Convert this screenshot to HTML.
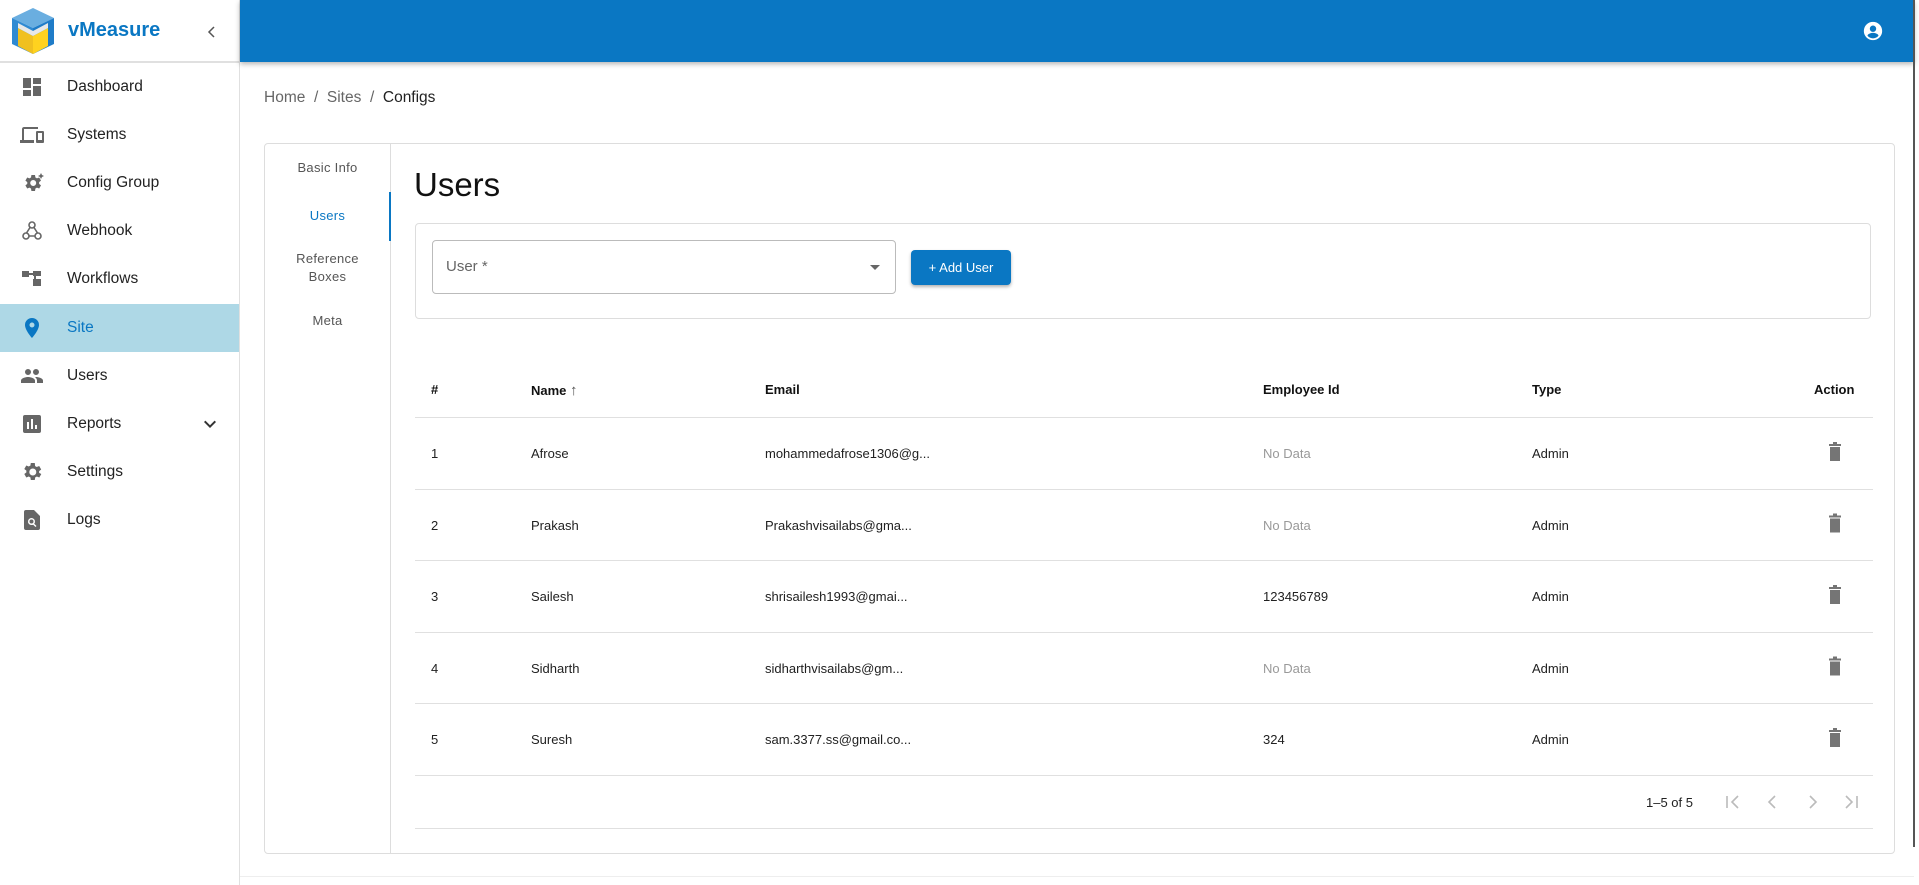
<!DOCTYPE html>
<html><head><meta charset="utf-8"><style>
*{box-sizing:border-box;margin:0;padding:0}
body{width:1919px;height:885px;overflow:hidden;background:#fff;font-family:"Liberation Sans",Roboto,sans-serif;position:relative;color:#212121}
.sb{position:absolute;left:0;top:0;width:240px;height:885px;border-right:1px solid #e0e0e0;background:#fff}
.logo{height:63px;border-bottom:2px solid #e0e0e0;position:relative}
.logo .t{position:absolute;left:68px;top:19px;font-size:20px;font-weight:bold;color:#0a77c3}
.mi{position:absolute;left:0;width:239px;height:48px;display:flex;align-items:center;font-size:15.5px;color:#222}
.mi svg{position:absolute;left:20px;width:24px;height:24px;fill:#666}
.mi span{position:absolute;left:67px}
.mi.act{background:#aed8e6;color:#0a77c3}
.mi.act svg{fill:#0a77c3}
.hd{position:absolute;left:240px;top:0;width:1674px;height:62px;background:#0a77c3;box-shadow:0 2px 5px rgba(0,0,0,.3)}
.bc{position:absolute;left:264px;top:89px;font-size:15.5px;color:#666}
.bc b{font-weight:normal;color:#222}
.card{position:absolute;left:264px;top:143px;width:1631px;height:711px;border:1px solid #ddd;border-radius:4px}
.tabs{position:absolute;left:0;top:0;width:126px;height:709px;border-right:1px solid #ddd}
.tab{position:absolute;left:0;width:125px;text-align:center;font-size:13px;color:#555;line-height:18px;letter-spacing:.3px}
.tl{position:absolute;font-size:13px}
.th{font-weight:bold;color:#111}
.row{position:absolute;left:415px;width:1458px;height:1px;background:#e0e0e0}
.scr{position:absolute;left:1913px;top:0;width:2px;height:847px;background:#555}
</style></head><body>
<div class="sb">
 <div class="logo">
  <svg style="position:absolute;left:10px;top:6px" width="46" height="50" viewBox="0 0 46 50">
   <polygon points="23,2 44,12 23,22 2,12" fill="#6aaee0"/>
   <polygon points="2,12 23,22 23,48 2,38" fill="#2f8ad3"/>
   <polygon points="44,12 23,22 23,48 44,38" fill="#1f7cc8"/>
   <polygon points="8,22 23,30 23,48 8,40" fill="#f0c020"/>
   <polygon points="38,22 23,30 23,48 38,40" fill="#ffd21f"/>
   <polygon points="8,17 23,25 38,17 38,22 23,30 8,22" fill="#e8e8e8"/>
  </svg>
  <div class="t">vMeasure</div>
  <svg style="position:absolute;left:204px;top:24px" width="16" height="16" viewBox="0 0 16 16"><path d="M10 3 5 8l5 5" stroke="#555" stroke-width="1.5" fill="none"/></svg>
 </div>
 <div class="mi" style="top:63px"><svg viewBox="0 0 24 24"><path d="M3 13h8V3H3zm0 8h8v-6H3zm10 0h8V11h-8zm0-18v6h8V3z"/></svg><span>Dashboard</span></div>
 <div class="mi" style="top:111px"><svg viewBox="0 0 24 24"><path d="M4 6h14V4H4c-1.1 0-2 .9-2 2v11H0v3h14v-3H4zm19 2h-6c-.5 0-1 .5-1 1v10c0 .5.5 1 1 1h6c.5 0 1-.5 1-1V9c0-.5-.5-1-1-1zm-1 9h-4v-7h4z"/></svg><span>Systems</span></div>
 <div class="mi" style="top:159px"><svg viewBox="0 0 24 24"><path d="M19.1 12.9a6 6 0 0 0 0-1.8l1.9-1.5-1.8-3.1-2.3.9a7 7 0 0 0-1.5-.9L15 4h-3.6l-.4 2.5c-.5.2-1 .5-1.5.9l-2.3-.9-1.8 3.1 1.9 1.5a6 6 0 0 0 0 1.8l-1.9 1.5 1.8 3.1 2.3-.9c.5.4 1 .7 1.5.9l.4 2.5H15l.4-2.5c.5-.2 1-.5 1.5-.9l2.3.9 1.8-3.1zM13.2 15a3 3 0 1 1 0-6 3 3 0 0 1 0 6zM21 2l1 2 2 1-2 1-1 2-1-2-2-1 2-1z"/></svg><span>Config Group</span></div>
 <div class="mi" style="top:207px"><svg viewBox="0 0 24 24" fill="none"><g stroke="#666" stroke-width="1.6" fill="none"><circle cx="12" cy="6" r="3"/><circle cx="6" cy="17" r="3"/><circle cx="18" cy="17" r="3"/><path d="M10 8.5 6.5 14M14 8.5l3.5 5.5M9 17h6"/></g></svg><span>Webhook</span></div>
 <div class="mi" style="top:255px"><svg viewBox="0 0 24 24"><path d="M2 4h7v6H2zm11 0h8v5h-8zm0 8h8v7h-8zM9 6h4v2H9zm5 2h2v5h-2z"/></svg><span>Workflows</span></div>
 <div class="mi act" style="top:304px"><svg viewBox="0 0 24 24"><path d="M12 2a7 7 0 0 0-7 7c0 5.2 7 13 7 13s7-7.8 7-13a7 7 0 0 0-7-7zm0 9.5a2.5 2.5 0 1 1 0-5 2.5 2.5 0 0 1 0 5z"/></svg><span>Site</span></div>
 <div class="mi" style="top:352px"><svg viewBox="0 0 24 24"><path d="M16 11a3 3 0 1 0 0-6 3 3 0 0 0 0 6zm-8 0a3 3 0 1 0 0-6 3 3 0 0 0 0 6zm0 2c-2.3 0-7 1.2-7 3.5V19h14v-2.5C15 14.2 10.3 13 8 13zm8 0c-.3 0-.6 0-1 .1 1.2.8 2 2 2 3.4V19h6v-2.5c0-2.3-4.7-3.5-7-3.5z"/></svg><span>Users</span></div>
 <div class="mi" style="top:400px"><svg viewBox="0 0 24 24"><path d="M19 3H5a2 2 0 0 0-2 2v14a2 2 0 0 0 2 2h14a2 2 0 0 0 2-2V5a2 2 0 0 0-2-2zM9 17H7v-7h2zm4 0h-2V7h2zm4 0h-2v-4h2z"/></svg><span>Reports</span><svg style="left:198px" viewBox="0 0 24 24"><path d="M7.4 8.6 12 13.2l4.6-4.6L18 10l-6 6-6-6z" fill="#333"/></svg></div>
 <div class="mi" style="top:448px"><svg viewBox="0 0 24 24"><path d="M19.1 12.9a7 7 0 0 0 0-1.8l2.1-1.6-2-3.5-2.5 1a7 7 0 0 0-1.6-.9L14.8 3h-4l-.4 2.600c-.6.2-1.1.5-1.6.9l-2.5-1-2 3.5 2.1 1.6a7 7 0 0 0 0 1.8l-2.1 1.6 2 3.5 2.5-1c.5.4 1 .7 1.6.9l.4 2.6h4l.4-2.6c.6-.2 1.1-.5 1.6-.9l2.5 1 2-3.5zM12.8 15.5a3.5 3.5 0 1 1 0-7 3.5 3.5 0 0 1 0 7z"/></svg><span>Settings</span></div>
 <div class="mi" style="top:496px"><svg viewBox="0 0 24 24"><path d="M14 2H6a2 2 0 0 0-2 2v16a2 2 0 0 0 2 2h12a2 2 0 0 0 2-2V8zm-2.5 15a3.5 3.5 0 1 1 2.7-1.3l2.3 2.3-1 1-2.3-2.3c-.5.2-1.1.3-1.7.3zm0-1.5a2 2 0 1 0 0-4 2 2 0 0 0 0 4z"/></svg><span>Logs</span></div>
</div>
<div class="hd"><svg style="position:absolute;left:1622px;top:20px" width="22" height="22" viewBox="0 0 24 24"><path fill="#fff" d="M12 2a10 10 0 1 0 0 20 10 10 0 0 0 0-20zm0 4a3.5 3.5 0 1 1 0 7 3.5 3.5 0 0 1 0-7zm0 14a8 8 0 0 1-6-2.8c0-2 4-3.1 6-3.1s6 1.1 6 3.1A8 8 0 0 1 12 20z"/></svg></div>
<div class="scr"></div>
<div class="bc">Home &nbsp;/&nbsp; Sites &nbsp;/&nbsp; <b>Configs</b></div>
<div class="card">
 <div class="tabs">
  <div class="tab" style="top:15px">Basic Info</div>
  <div class="tab" style="top:63px;color:#0a77c3">Users</div>
  <div style="position:absolute;left:124px;top:48px;width:2px;height:49px;background:#0a77c3"></div>
  <div class="tab" style="top:106px">Reference<br>Boxes</div>
  <div class="tab" style="top:168px">Meta</div>
 </div>
</div>
<div style="position:absolute;left:414px;top:166px;font-size:33px;color:#111">Users</div>
<div style="position:absolute;left:415px;top:223px;width:1456px;height:96px;border:1px solid #ddd;border-radius:4px"></div>
<div style="position:absolute;left:432px;top:240px;width:464px;height:54px;border:1px solid #bbb;border-radius:4px"></div>
<div style="position:absolute;left:446px;top:258px;font-size:15px;color:#666">User *</div>
<div style="position:absolute;left:870px;top:265px;width:0;height:0;border-left:5px solid transparent;border-right:5px solid transparent;border-top:5px solid #666"></div>
<div style="position:absolute;left:911px;top:250px;width:100px;height:35px;background:#0a77c3;border-radius:4px;box-shadow:0 2px 3px rgba(0,0,0,.3);color:#fff;font-size:13px;text-align:center;line-height:35px">+ Add User</div>

<div class="tl th" style="left:431px;top:382px">#</div>
<div class="tl th" style="left:531px;top:382px">Name <span style="font-weight:normal;color:#555;font-size:15px">&#8593;</span></div>
<div class="tl th" style="left:765px;top:382px">Email</div>
<div class="tl th" style="left:1263px;top:382px">Employee Id</div>
<div class="tl th" style="left:1532px;top:382px">Type</div>
<div class="tl th" style="left:1814px;top:382px">Action</div>
<div class="row" style="top:417px"></div>

<div class="tl" style="left:431px;top:446px">1</div><div class="tl" style="left:531px;top:446px">Afrose</div><div class="tl" style="left:765px;top:446px">mohammedafrose1306@g...</div><div class="tl" style="left:1263px;top:446px;color:#999">No Data</div><div class="tl" style="left:1532px;top:446px">Admin</div>
<div class="row" style="top:489px"></div>
<div class="tl" style="left:431px;top:518px">2</div><div class="tl" style="left:531px;top:518px">Prakash</div><div class="tl" style="left:765px;top:518px">Prakashvisailabs@gma...</div><div class="tl" style="left:1263px;top:518px;color:#999">No Data</div><div class="tl" style="left:1532px;top:518px">Admin</div>
<div class="row" style="top:560px"></div>
<div class="tl" style="left:431px;top:589px">3</div><div class="tl" style="left:531px;top:589px">Sailesh</div><div class="tl" style="left:765px;top:589px">shrisailesh1993@gmai...</div><div class="tl" style="left:1263px;top:589px">123456789</div><div class="tl" style="left:1532px;top:589px">Admin</div>
<div class="row" style="top:632px"></div>
<div class="tl" style="left:431px;top:661px">4</div><div class="tl" style="left:531px;top:661px">Sidharth</div><div class="tl" style="left:765px;top:661px">sidharthvisailabs@gm...</div><div class="tl" style="left:1263px;top:661px;color:#999">No Data</div><div class="tl" style="left:1532px;top:661px">Admin</div>
<div class="row" style="top:703px"></div>
<div class="tl" style="left:431px;top:732px">5</div><div class="tl" style="left:531px;top:732px">Suresh</div><div class="tl" style="left:765px;top:732px">sam.3377.ss@gmail.co...</div><div class="tl" style="left:1263px;top:732px">324</div><div class="tl" style="left:1532px;top:732px">Admin</div>
<div class="row" style="top:775px"></div>
<svg style="position:absolute;left:1825px;top:442px" width="20" height="310" viewBox="0 0 20 310"><g fill="#757575">
<path id="tr" d="M5 5h10v14H5zM4 2h12v2H4zM8 0h4v2H8z"/>
<use href="#tr" y="71.5"/><use href="#tr" y="143"/><use href="#tr" y="214.5"/><use href="#tr" y="286"/></g></svg>
<div class="tl" style="left:1646px;top:795px;font-size:13px">1–5 of 5</div>
<svg style="position:absolute;left:1722px;top:791px" width="140" height="22" viewBox="0 0 140 22" fill="none" stroke="#bbb" stroke-width="1.6">
<path d="M5 5v12M16 5l-6 6 6 6"/><path d="M53 5l-6 6 6 6"/><path d="M88 5l6 6-6 6"/><path d="M124 5l6 6-6 6M135 5v12"/></svg>
<div class="row" style="top:828px"></div>
<div style="position:absolute;left:240px;top:876px;width:1674px;height:1px;background:#eee"></div>
</body></html>
